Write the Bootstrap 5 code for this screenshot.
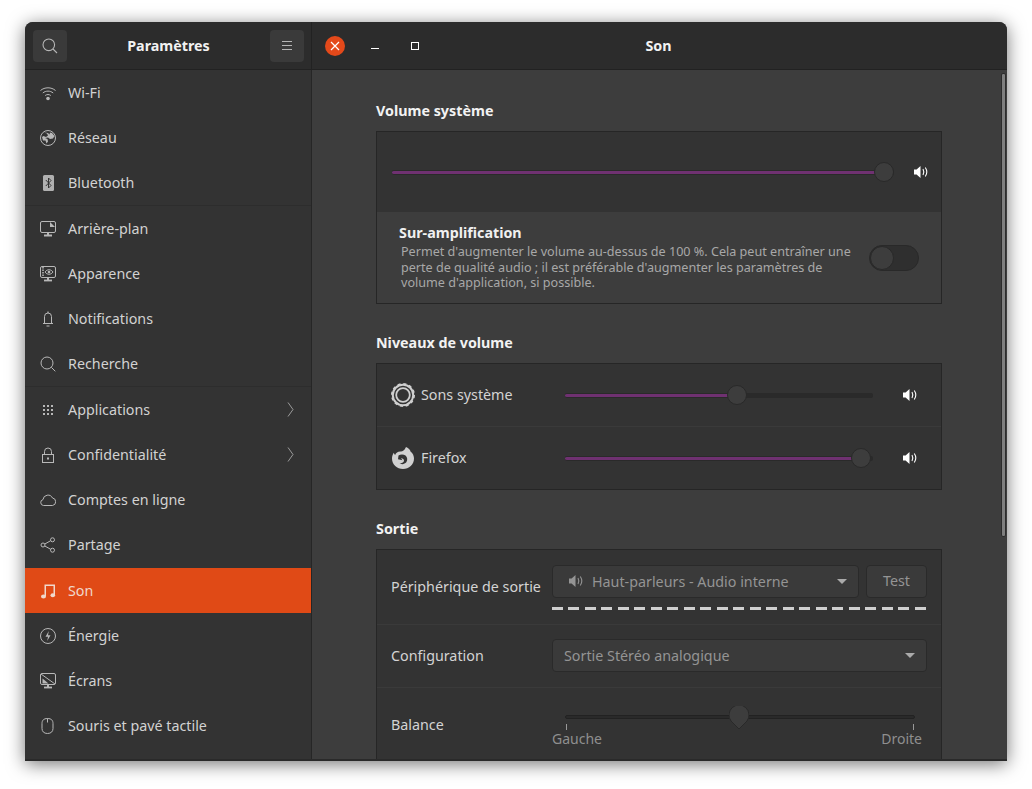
<!DOCTYPE html>
<html lang="fr">
<head>
  <meta charset="UTF-8">
  <title>Paramètres - Son</title>
  <meta name="viewport" content="width=device-width, initial-scale=1">
  <link href="https://cdn.jsdelivr.net/npm/bootstrap@5.3.3/dist/css/bootstrap.min.css" rel="stylesheet">
  <style>
    html, body { height: 100%; }
    body {
      background: #fff;
      font-family: "Noto Sans", "Open Sans", sans-serif;
      font-size: 14.3px;
      color: #d4d4d4;
      overflow: hidden;
      padding: 22px 25px 28px;
    }

    .app-window {
      height: 739px;
      background: #3d3d3d;
      border-radius: 8px 8px 0 0;
      border-bottom: 2px solid #2a2a2a;
      box-shadow: 0 3px 18px rgba(0,0,0,.55);
      overflow: hidden;
    }

    /* barre de titre */
    .titlebar { height: 48px; background: #2c2c2c; border-bottom: 1px solid #222; flex: none; }
    .titlebar-left { width: 287px; border-right: 1px solid #222; padding: 0 7px 0 8px; }
    .titlebar-right { padding-left: 13px; }
    .title { color: #f2f2f2; font-weight: 700; }
    .head-btn { width: 34px; height: 32px; background: #3a3a3a; border-radius: 4px; border: 0; padding: 0; }
    .win-close { width: 20px; height: 20px; background: #e4491a; border-radius: 50%; border: 0; padding: 0; }
    .win-controls { width: 118px; }
    .win-min, .win-max { width: 20px; margin-left: 20px; border: 0; background: none; padding: 0; }

    /* barre latérale */
    .sidebar { width: 287px; background: #333; border-right: 1px solid #262626; flex: none; }
    .side-list { --bs-list-group-bg: transparent; --bs-list-group-color: #d2d2d2; --bs-list-group-border-width: 0; border-radius: 0; }
    .side-item {
      height: 45px;
      padding: 0 17px 0 15px;
      gap: 12px;
      background: transparent;
    }
    .side-item svg.ico { width: 16px; height: 16px; flex: none; }
    .side-sep { height: 1px; background: #2d2d2d; }
    .side-item.current { background: #e04a16; color: #f0d8cc; margin-top: 1px; }
    .chev { width: 7px; height: 15px; margin-left: auto; flex: none; }

    /* contenu */
    .content { padding: 0 0 0 64px; position: relative; min-width: 0; }
    .content-col { width: 566px; }
    .sec-title { color: #f2f2f2; font-weight: 700; height: 20px; line-height: 20px; margin: 0 0 10px; font-size: 14.3px; }
    .frame { background: #333; border: 1px solid #262626; }
    .frame-sep { border-top: 1px solid #3a3a3a; }
    .scroll-thumb {
      position: absolute; top: 3px; right: 1px; width: 5px; height: 464px;
      background: #7f7f7f; border: 1px solid #2c2c2c; border-radius: 2px;
    }

    /* curseurs */
    .track { height: 5px; background: #2a2a2a; border-radius: 2px; position: relative; }
    .track-fill { height: 5px; background: #6f3171; border: 1px solid #2a2a2a; border-width: 1px 0; border-radius: 2px 0 0 2px; }
    .thumb {
      position: absolute; top: 50%; width: 20px; height: 20px; margin: -10px 0 0 -10px;
      background: #3d3d3d; border: 1px solid #292929; border-radius: 50%;
    }
    .spk { width: 16px; height: 16px; flex: none; }

    .amp-row { height: 91px; background: #3d3d3d; padding: 0 22px 0 22px; }
    .amp-title { color: #f0f0f0; font-weight: 700; font-size: 14.3px; line-height: 17px; margin-bottom: 3px; }
    .amp-text { color: #a8a8a8; font-size: 12.6px; line-height: 15.5px; padding-left: 2px; white-space: nowrap; }
    .toggle { width: 50px; height: 26px; background: #2f2f2f; border: 1px solid #292929; border-radius: 13px; position: relative; flex: none; }
    .toggle span { position: absolute; left: 0; top: 0; width: 24px; height: 24px; background: #3d3d3d; border: 1px solid #292929; border-radius: 50%; }

    .app-row { height: 62px; padding: 0 23px 0 14px; }
    .app-label { width: 174px; flex: none; gap: 6px; padding-bottom: 1px; }
    .app-label svg { width: 24px; height: 24px; flex: none; margin-top: 1px; }
    .app-row .track { margin-right: 29px; }

    .out-row { padding: 0 14px; }
    .out-label { width: 161px; flex: none; padding-bottom: 1px; }
    .combo {
      height: 33px; background: #3a3a3a; border: 1px solid #2a2a2a; border-radius: 4px;
      color: #949494; padding: 0 11px; line-height: 31px;
    }
    .combo-up { margin-bottom: 1px; }
    .btn-test {
      --bs-btn-bg: #3a3a3a; --bs-btn-border-color: #2a2a2a; --bs-btn-color: #949494;
      --bs-btn-disabled-bg: #3a3a3a; --bs-btn-disabled-border-color: #2a2a2a; --bs-btn-disabled-color: #949494;
      --bs-btn-disabled-opacity: 1; --bs-btn-font-size: 14.3px; --bs-btn-border-radius: 4px;
      width: 61px; height: 33px; padding: 0;
    }
    .caret { width: 0; height: 0; border: 5px solid transparent; border-top: 5px solid #aaa; border-bottom: 0; margin-left: auto; flex: none; }
    .dashes {
      height: 3px; margin-top: 9px;
      background: repeating-linear-gradient(to right, #cfcfcf 0 11px, transparent 11px 16.5px);
    }
    .bal-wrap { width: 370px; padding-top: 27px; }
    .bal-track { margin: 0 7px 0 13px; height: 4px; background: #2a2a2a; border: 1px solid #222; border-radius: 2px; position: relative; }
    .bal-thumb { position: absolute; left: 50%; top: -10px; margin-left: -11px; width: 20px; height: 24px; }
    .tick { position: absolute; top: 8px; width: 1px; height: 6px; background: #999; }
    .bal-labels { color: #8f8f8f; font-size: 14px; margin-top: 10px; line-height: 20px; }
  </style>
</head>
<body>

<!-- icones symboliques -->
<svg width="0" height="0" class="position-absolute">
  <defs>
    <g id="spk-shape">
      <path d="M1 5.500h2.600L7.500 2v12L3.600 10.500H1z" fill="currentColor"/>
      <path d="M10 5c1 1.800 1 4.200 0 6M12.300 3.500c1.800 2.700 1.800 6.300 0 9" fill="none" stroke="currentColor" stroke-width="1.100"/>
    </g>
    <g id="chev-shape"><path d="M1 .5 6 7.500 1 14.500" fill="none" stroke="#9a9a9a"/></g>
  </defs>
</svg>

<div class="app-window d-flex flex-column">

  <!-- Barre de titre -->
  <div class="titlebar d-flex">
    <div class="titlebar-left d-flex align-items-center justify-content-between">
      <button class="head-btn d-flex align-items-center justify-content-center">
        <svg width="16" height="16" viewBox="0 0 16 16" fill="none" stroke="#b5b5b5" stroke-width="1.100"><circle cx="6.800" cy="6.800" r="5.800"/><path d="M11 11l4 4"/></svg>
      </button>
      <span class="title">Paramètres</span>
      <button class="head-btn d-flex align-items-center justify-content-center">
        <svg width="12" height="12" viewBox="0 0 12 12" stroke="#b5b5b5"><path d="M1 1.500h10M1 5.500h10M1 9.500h10"/></svg>
      </button>
    </div>
    <div class="titlebar-right flex-grow-1 d-flex align-items-center">
      <div class="win-controls d-flex align-items-center">
        <button class="win-close d-flex align-items-center justify-content-center">
          <svg width="10" height="10" viewBox="0 0 10 10" stroke="#fff" stroke-width="1.200"><path d="M1 1l8 8M9 1l-8 8"/></svg>
        </button>
        <button class="win-min d-flex justify-content-center">
          <svg width="8" height="8" viewBox="0 0 8 8" stroke="#fff"><path d="M0 6.500h8"/></svg>
        </button>
        <button class="win-max d-flex justify-content-center">
          <svg width="8" height="8" viewBox="0 0 8 8" fill="none" stroke="#fff"><rect x=".5" y=".5" width="7" height="7"/></svg>
        </button>
      </div>
      <div class="title flex-grow-1 text-center" style="padding-right:133px">Son</div>
    </div>
  </div>

  <div class="d-flex flex-grow-1 overflow-hidden">

    <!-- Barre latérale -->
    <div class="sidebar">
      <div class="list-group list-group-flush side-list">
        <div class="list-group-item side-item d-flex align-items-center">
          <svg class="ico" viewBox="0 0 16 16" fill="none" stroke="#b8b8b8"><path d="M.5 5.500c4.200-3.600 10.800-3.600 15 0M2.800 8c2.900-2.500 7.500-2.500 10.400 0M5.200 10.500c1.600-1.300 4-1.300 5.600 0"/><circle cx="8" cy="13.500" r="1.800" fill="#b8b8b8" stroke="none"/></svg>
          Wi-Fi
        </div>
        <div class="list-group-item side-item d-flex align-items-center">
          <svg class="ico" viewBox="0 0 16 16"><circle cx="8" cy="8" r="7.500" fill="none" stroke="#b8b8b8"/><path d="M4 2.500 7 3.500 8 5.500 6 7 3.500 6 2 7 3 10.500 5.500 10.500 6.500 13.500 8 11.500 7.500 9 5 8 8 7.500 10 9 13 8.500 14.500 6 12 3 10 2.500 9.500 4.500 8 3z" fill="#b8b8b8"/></svg>
          Réseau
        </div>
        <div class="list-group-item side-item d-flex align-items-center">
          <svg class="ico" viewBox="0 0 16 16"><rect x="3" y="0" width="11" height="16" rx="1.500" fill="#b0b0b0"/><path d="M5.800 5 11 10.500 8.500 13V3L11 5.500 5.800 11" fill="none" stroke="#333"/></svg>
          Bluetooth
        </div>
        <div class="side-sep"></div>
        <div class="list-group-item side-item d-flex align-items-center">
          <svg class="ico" viewBox="0 0 16 16" fill="none" stroke="#b8b8b8"><path d="M2 .5h12a1.500 1.500 0 0 1 1.500 1.500v8a1.500 1.500 0 0 1-1.500 1.500H2A1.500 1.500 0 0 1 .5 10V2A1.500 1.500 0 0 1 2 .5z"/><path d="M10 1l5 5h-5z" fill="#b8b8b8" stroke="none"/><path d="M4 14.500h8" stroke-width="1.800"/><path d="M8 11.500v3" stroke-width="2"/></svg>
          Arrière-plan
        </div>
        <div class="list-group-item side-item d-flex align-items-center">
          <svg class="ico" viewBox="0 0 16 16" fill="none" stroke="#b8b8b8"><rect x=".5" y=".5" width="15" height="11" rx="1.500"/><path d="M3 1v10" stroke-dasharray="1.500 1" stroke-width="1.500"/><path d="M5 6c2-3 6-3 8 0-2 3-6 3-8 0z"/><circle cx="9" cy="6" r="1.300" fill="#b8b8b8" stroke="none"/><path d="M4 14.500h8" stroke-width="1.800"/><path d="M8 11.500v3" stroke-width="2"/></svg>
          Apparence
        </div>
        <div class="list-group-item side-item d-flex align-items-center">
          <svg class="ico" viewBox="0 0 16 16" fill="none" stroke="#b8b8b8"><path d="M4.500 12V5.500a3.500 3.500 0 0 1 7 0V12"/><path d="M3 12.500h10"/><path d="M8 .5v1.500M6.500 15h3" stroke-width="1.200"/></svg>
          Notifications
        </div>
        <div class="list-group-item side-item d-flex align-items-center">
          <svg class="ico" viewBox="0 0 16 16" fill="none" stroke="#b8b8b8"><circle cx="7" cy="7" r="6"/><path d="M11.300 11.300l4 4"/></svg>
          Recherche
        </div>
        <div class="side-sep"></div>
        <div class="list-group-item side-item d-flex align-items-center">
          <svg class="ico" viewBox="0 0 16 16" fill="#b8b8b8"><rect x="3" y="3" width="2" height="2"/><rect x="7" y="3" width="2" height="2"/><rect x="11" y="3" width="2" height="2"/><rect x="3" y="7" width="2" height="2"/><rect x="7" y="7" width="2" height="2"/><rect x="11" y="7" width="2" height="2"/><rect x="3" y="11" width="2" height="2"/><rect x="7" y="11" width="2" height="2"/><rect x="11" y="11" width="2" height="2"/></svg>
          Applications
          <svg class="chev" viewBox="0 0 7 15"><use href="#chev-shape"/></svg>
        </div>
        <div class="list-group-item side-item d-flex align-items-center">
          <svg class="ico" viewBox="0 0 16 16" fill="none" stroke="#b8b8b8"><rect x="2.500" y="7.500" width="11" height="8"/><path d="M4.500 7.500V4.500a3.500 3.500 0 0 1 7 0v3"/><rect x="7" y="10.500" width="2" height="2" fill="#b8b8b8" stroke="none"/></svg>
          Confidentialité
          <svg class="chev" viewBox="0 0 7 15"><use href="#chev-shape"/></svg>
        </div>
        <div class="list-group-item side-item d-flex align-items-center">
          <svg class="ico" viewBox="0 0 16 16" fill="none" stroke="#b8b8b8"><path d="M3.500 13.500a3 3 0 0 1-.5-5.900A5 5 0 0 1 12.500 6a3.800 3.800 0 0 1 0 7.500z"/></svg>
          Comptes en ligne
        </div>
        <div class="list-group-item side-item d-flex align-items-center">
          <svg class="ico" viewBox="0 0 16 16" fill="none" stroke="#b8b8b8"><circle cx="3" cy="8" r="2"/><circle cx="12.500" cy="2.800" r="2"/><circle cx="12.500" cy="13.200" r="2"/><path d="M4.800 7l5.900-3.300M4.800 9l5.900 3.300"/></svg>
          Partage
        </div>
        <div class="list-group-item side-item current d-flex align-items-center">
          <svg class="ico" viewBox="0 0 16 16" fill="#f0d8cc"><path d="M4.500 1.500H15v1.500H6V13h-1.500zM13.500 1.500H15V12h-1.500z"/><ellipse cx="3.500" cy="13.500" rx="2.500" ry="2"/><ellipse cx="12.800" cy="12.300" rx="2.300" ry="2"/></svg>
          Son
        </div>
        <div class="list-group-item side-item d-flex align-items-center">
          <svg class="ico" viewBox="0 0 16 16"><circle cx="8" cy="8" r="7.500" fill="none" stroke="#b8b8b8"/><path d="M8.800 3 5.500 8.800H8L7.200 13l3.300-5.800H8z" fill="#b8b8b8"/></svg>
          Énergie
        </div>
        <div class="list-group-item side-item d-flex align-items-center">
          <svg class="ico" viewBox="0 0 16 16" fill="none" stroke="#b8b8b8"><rect x=".5" y=".5" width="15" height="11" rx="1.500"/><path d="M1 1l14 10"/><path d="M2.500 10.500V5.500l6 5z" fill="#b8b8b8" stroke="none"/><path d="M4 14.500h8" stroke-width="1.800"/><path d="M8 11.500v3" stroke-width="2"/></svg>
          Écrans
        </div>
        <div class="list-group-item side-item d-flex align-items-center">
          <svg class="ico" viewBox="0 0 16 16" fill="none" stroke="#b8b8b8"><path d="M7.500.5c4 0 5.500 2 5.500 5v5c0 3-2 5-5.500 5S2 13.500 2 10.500v-5c0-3 1.500-5 5.500-5zM7.500.5v4"/></svg>
          Souris et pavé tactile
        </div>
      </div>
    </div>

    <!-- Contenu -->
    <div class="content flex-grow-1 overflow-hidden">
      <div class="scroll-thumb"></div>
      <div class="content-col">

        <h6 class="sec-title" style="margin-top:31px">Volume système</h6>
        <div class="frame">
          <div class="d-flex align-items-center" style="height:80px;padding:0 12px 0 15px;gap:19px">
            <div class="track flex-grow-1">
              <div class="track-fill" style="width:98%"></div>
              <span class="thumb" style="left:98%"></span>
            </div>
            <svg class="spk text-white" viewBox="0 0 16 16"><use href="#spk-shape"/></svg>
          </div>
          <div class="amp-row d-flex align-items-center justify-content-between">
            <div>
              <div class="amp-title">Sur-amplification</div>
              <div class="amp-text">Permet d'augmenter le volume au-dessus de 100 %. Cela peut entraîner une<br>perte de qualité audio ; il est préférable d'augmenter les paramètres de<br>volume d'application, si possible.</div>
            </div>
            <div class="toggle"><span></span></div>
          </div>
        </div>

        <h6 class="sec-title" style="margin-top:29px">Niveaux de volume</h6>
        <div class="frame">
          <div class="app-row d-flex align-items-center">
            <div class="app-label d-flex align-items-center">
              <svg viewBox="0 0 24 24" fill="none"><circle cx="12" cy="12" r="10.200" stroke="#cfcfcf" stroke-width="2"/><circle cx="12" cy="12" r="11" stroke="#cfcfcf" stroke-width="2" stroke-dasharray="3 2.760"/><circle cx="12" cy="12" r="6.800" stroke="#cfcfcf" stroke-width="1.800"/></svg>
              Sons système
            </div>
            <div class="track flex-grow-1">
              <div class="track-fill" style="width:56%"></div>
              <span class="thumb" style="left:56%"></span>
            </div>
            <svg class="spk text-white" viewBox="0 0 16 16"><use href="#spk-shape"/></svg>
          </div>
          <div class="frame-sep"></div>
          <div class="app-row d-flex align-items-center">
            <div class="app-label d-flex align-items-center">
              <svg viewBox="0 0 24 24"><path d="M15 1c3 1.200 4.200 3 4.500 4.500C22 7.500 23 10 23 12.500 23 18.500 18 23 12 23S1 18.500 1 12.500c0-2.200.7-4.200 1.800-5.800.2 1 .7 1.700 1.300 2.200C5 6.500 7.500 5 10 5.500c1.500-.1 3.500-1 5-4.500z" fill="#d0d0d0"/><path d="M7.500 9.500c2-1.500 5-1.500 7 0 2 1.600 2.300 4.800.8 6.800-1.700 2-5 2.500-7 .8 2 .6 4.500-.2 4.700-2.300.1-1.500-1.300-2.600-3-2.500l1.500 2L7 13.200z" fill="#333"/></svg>
              Firefox
            </div>
            <div class="track flex-grow-1">
              <div class="track-fill" style="width:96%"></div>
              <span class="thumb" style="left:96%"></span>
            </div>
            <svg class="spk text-white" viewBox="0 0 16 16"><use href="#spk-shape"/></svg>
          </div>
        </div>

        <h6 class="sec-title" style="margin-top:29px">Sortie</h6>
        <div class="frame">
          <div class="out-row d-flex align-items-center" style="height:74px">
            <div class="out-label">Périphérique de sortie</div>
            <div class="flex-grow-1">
              <div class="d-flex" style="gap:7px">
                <div class="combo flex-grow-1 d-flex align-items-center" style="padding-left:15px">
                  <svg class="spk me-2" style="color:#949494" viewBox="0 0 16 16"><use href="#spk-shape"/></svg>
                  Haut-parleurs - Audio interne
                  <span class="caret"></span>
                </div>
                <button class="btn btn-test" disabled>Test</button>
              </div>
              <div class="dashes"></div>
            </div>
          </div>
          <div class="frame-sep"></div>
          <div class="out-row d-flex align-items-center" style="height:62px">
            <div class="out-label">Configuration</div>
            <div class="combo combo-up flex-grow-1 d-flex align-items-center">
              Sortie Stéréo analogique
              <span class="caret"></span>
            </div>
          </div>
          <div class="frame-sep"></div>
          <div class="out-row d-flex align-items-center" style="height:73px">
            <div class="out-label pb-0">Balance</div>
            <div class="bal-wrap align-self-start">
              <div class="bal-track">
                <span class="tick" style="left:0"></span>
                <span class="tick" style="right:0"></span>
                <svg class="bal-thumb" viewBox="0 0 20 24"><path d="M10 23 2 15A10 10 0 1 1 18 15z" fill="#3d3d3d" stroke="#292929"/></svg>
              </div>
              <div class="bal-labels d-flex justify-content-between"><span>Gauche</span><span>Droite</span></div>
            </div>
          </div>
        </div>

      </div>
    </div>
  </div>
</div>

<script src="https://cdn.jsdelivr.net/npm/bootstrap@5.3.3/dist/js/bootstrap.bundle.min.js"></script>
</body>
</html>
